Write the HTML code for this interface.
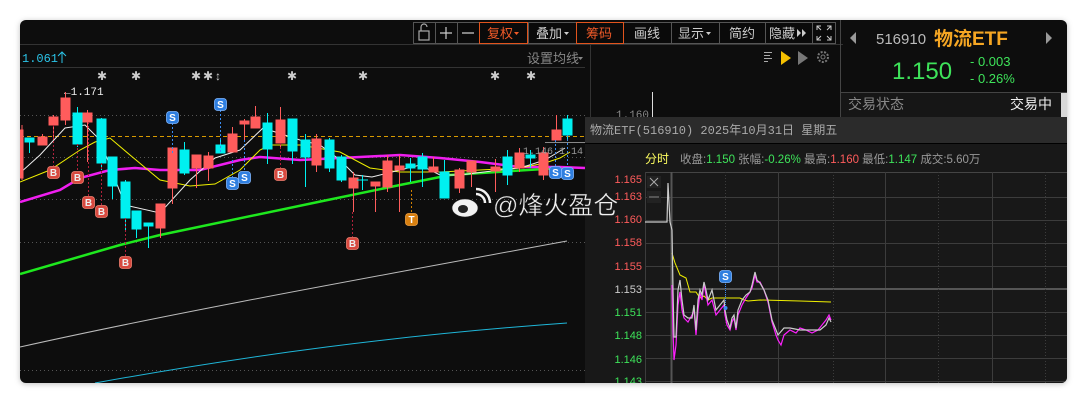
<!DOCTYPE html>
<html><head><meta charset="utf-8"><style>
html,body{margin:0;padding:0;background:#fff;width:1087px;height:404px;overflow:hidden}
svg{display:block}
text{font-family:"Liberation Sans","Noto Sans CJK SC",sans-serif}
.m{font-family:"Liberation Mono","Noto Sans CJK SC",monospace}
</style></head><body>
<svg width="1087" height="404" viewBox="0 0 1087 404" xmlns="http://www.w3.org/2000/svg">
<defs><clipPath id="card"><rect x="20" y="20" width="1047" height="363" rx="6"/></clipPath>
<filter id="sh" x="-5%" y="-5%" width="110%" height="120%"><feDropShadow dx="0" dy="1" stdDeviation="3" flood-color="#000" flood-opacity="0.25"/></filter></defs>
<rect x="20" y="20" width="1047" height="363" rx="6" fill="#0a0a0a" filter="url(#sh)"/>
<g clip-path="url(#card)">
<!-- toolbar -->
<g stroke="#555" fill="#0a0a0a">
<rect x="413.5" y="22.5" width="422" height="21"/>
</g>
<g stroke="#555">
<line x1="435.5" y1="22" x2="435.5" y2="44"/><line x1="457.5" y1="22" x2="457.5" y2="44"/>
<line x1="479.5" y1="22" x2="479.5" y2="44"/><line x1="528.5" y1="22" x2="528.5" y2="44"/>
<line x1="623.5" y1="22" x2="623.5" y2="44"/><line x1="671.5" y1="22" x2="671.5" y2="44"/>
<line x1="719.5" y1="22" x2="719.5" y2="44"/><line x1="765.5" y1="22" x2="765.5" y2="44"/>
<line x1="812.5" y1="22" x2="812.5" y2="44"/>
</g>
<rect x="479.5" y="22.5" width="48" height="21" fill="none" stroke="#e2541d"/>
<rect x="576.5" y="22.5" width="47" height="21" fill="none" stroke="#e2541d"/>
<!-- lock -->
<g stroke="#aaa" fill="none" stroke-width="1.2"><rect x="419" y="31" width="10" height="9"/><path d="M421 31v-4a3 3 0 0 1 6 0"/></g>
<g stroke="#ccc" stroke-width="1.2"><line x1="440" y1="33" x2="452" y2="33"/><line x1="446" y1="27" x2="446" y2="39"/><line x1="462" y1="33" x2="474" y2="33"/></g>
<g font-size="13" fill="#ccc">
<text x="487" y="38" fill="#f05a28">复权</text><path d="M514 32h5l-2.5 3z" fill="#f05a28"/>
<text x="536" y="38">叠加</text><path d="M564 32h5l-2.5 3z" fill="#ccc"/>
<text x="586" y="38" fill="#f05a28">筹码</text>
<text x="634" y="38">画线</text>
<text x="678" y="38">显示</text><path d="M706 32h5l-2.5 3z" fill="#ccc"/>
<text x="729" y="38">简约</text>
<text x="769" y="38">隐藏</text><path d="M797 29l4 4-4 4zM802 29l4 4-4 4z" fill="#ccc"/>
</g>
<g stroke="#ccc" fill="none" stroke-width="1"><path d="M817 30v-4h4M831 30v-4h-4M817 36v4h4M831 36v4h-4M817 26l4 4M831 26l-4 4M817 40l4-4M831 40l-4-4"/></g>
<!-- separators -->
<line x1="20" y1="44.5" x2="843" y2="44.5" stroke="#333"/>
<line x1="20" y1="67.5" x2="585" y2="67.5" stroke="#333"/>
<line x1="590.5" y1="44" x2="590.5" y2="117" stroke="#333"/>
<line x1="840.5" y1="20" x2="840.5" y2="117" stroke="#444"/>
<!-- right panel -->
<path d="M856 32v12l-6-6z" fill="#999"/><path d="M1046 32v12l6-6z" fill="#999"/>
<text x="876" y="44" font-size="15" fill="#bbb">516910</text>
<text x="934" y="45" font-size="19" font-weight="bold" fill="#f5a623">物流ETF</text>
<text x="892" y="79" font-size="24" fill="#3ee35a">1.150</text>
<text x="970" y="66" font-size="13" fill="#3ee35a">- 0.003</text>
<text x="970" y="83" font-size="13" fill="#3ee35a">- 0.26%</text>
<line x1="841" y1="92.5" x2="1067" y2="92.5" stroke="#444"/>
<rect x="841" y="93" width="226" height="24" fill="#161616"/>
<text x="848" y="109" font-size="14" fill="#888">交易状态</text>
<text x="1010" y="109" font-size="14" fill="#eee">交易中</text>
<rect x="1061" y="93" width="6" height="24" fill="#d8d8d8"/>
<!-- middle icons -->
<g stroke="#aaa"><line x1="764" y1="52.5" x2="772" y2="52.5"/><line x1="764" y1="55.5" x2="770" y2="55.5"/><line x1="764" y1="58.5" x2="772" y2="58.5"/><line x1="764" y1="61.5" x2="768" y2="61.5"/></g>
<path d="M781 51l10 7-10 7z" fill="#f5c000"/><path d="M798 51l10 7-10 7z" fill="#777"/>
<circle cx="823" cy="57" r="5" fill="none" stroke="#777" stroke-width="2" stroke-dasharray="2 1.5"/><circle cx="823" cy="57" r="2" fill="none" stroke="#777"/>
<line x1="652.5" y1="92" x2="652.5" y2="117" stroke="#ddd"/>
<text x="616" y="118" font-size="11" fill="#888" class="m">1.160</text>
<!-- left chart header -->
<text x="22" y="62" font-size="12" fill="#2bc4e8" class="m">1.061</text>
<path d="M62 63V52M58 56l4-4 4 4" stroke="#2bc4e8" fill="none"/>
<text x="527" y="63" font-size="13" fill="#888">设置均线</text><path d="M578 57h5l-2.5 3z" fill="#888"/>
<!-- stars -->
<g fill="#ccc" font-size="12">
<text x="97" y="80">✱</text><text x="131" y="80">✱</text><text x="191" y="80">✱</text><text x="203" y="80">✱</text><text x="215" y="80">↕</text><text x="287" y="80">✱</text><text x="358" y="80">✱</text><text x="490" y="80">✱</text><text x="526" y="80">✱</text>
</g>
<text x="64" y="95" font-size="11" fill="#eee" class="m">←1.171</text>
<!-- grid -->
<g stroke="#555" stroke-dasharray="1 3">
<line x1="20" y1="115.5" x2="585" y2="115.5"/><line x1="20" y1="157.5" x2="585" y2="157.5"/>
<line x1="20" y1="199.5" x2="585" y2="199.5"/><line x1="20" y1="242.5" x2="585" y2="242.5"/>
<line x1="20" y1="370.5" x2="585" y2="370.5"/>
</g>
<line x1="20" y1="136.5" x2="585" y2="136.5" stroke="#d89a00" stroke-dasharray="4 3"/>
<!-- long MAs -->
<path d="M20 347 C150 318,300 290,567 241" stroke="#bbb" fill="none"/>
<path d="M95 383 C250 355,400 335,567 323" stroke="#1fb6d8" fill="none"/>
<polyline points="20,274 120,245 160,235 318,202 400,185 450,175 560,168" stroke="#1ee81e" stroke-width="2.5" fill="none"/>
<polyline points="20,202 60,190 80,178 110,170 135,168 160,170 200,170 240,160 260,157 300,160 360,157 400,155 440,158 480,162 520,167 560,167 585,168" stroke="#f01ef0" stroke-width="2.5" fill="none"/>
<polyline points="20,182 50,170 80,150 95,142 110,138 130,155 160,180 190,186 215,184 240,170 260,150 270,145 300,145 340,152 370,168 400,172 440,172 480,170 520,168 545,163 560,158 570,152" stroke="#f0f000" fill="none"/>
<polyline points="20,173 40,155 65,128 85,125 100,140 125,205 160,213 190,180 215,158 240,150 263,128 300,140 320,145 340,160 355,175 372,177 400,170 420,165 440,175 460,175 500,170 520,168 545,160 565,148" stroke="#eee" fill="none"/>
<!-- candles: wick then body -->
<g id="c">
<g stroke="#ff5c5c" fill="#ff5c5c">
<line x1="22" y1="125" x2="22" y2="180"/><rect x="20" y="130" width="3" height="48"/>
<line x1="42.5" y1="134" x2="42.5" y2="145"/><rect x="38" y="137" width="9" height="8"/>
<line x1="53.5" y1="115" x2="53.5" y2="140"/><rect x="49" y="117" width="9" height="8"/>
<line x1="65.5" y1="92" x2="65.5" y2="125"/><rect x="61" y="98" width="9" height="22"/>
<line x1="87.5" y1="110" x2="87.5" y2="162"/><rect x="83" y="113" width="9" height="9"/>
<line x1="160.5" y1="204" x2="160.5" y2="238"/><rect x="156" y="204" width="9" height="24"/>
<line x1="172.5" y1="148" x2="172.5" y2="204"/><rect x="168" y="148" width="9" height="40"/>
<line x1="196.5" y1="155" x2="196.5" y2="188"/><rect x="192" y="155" width="9" height="13"/>
<line x1="208.5" y1="152" x2="208.5" y2="181"/><rect x="204" y="156" width="9" height="12"/>
<line x1="232.5" y1="127" x2="232.5" y2="152"/><rect x="228" y="134" width="9" height="18"/>
<line x1="244.5" y1="119" x2="244.5" y2="140"/><rect x="240" y="121" width="9" height="3"/>
<line x1="255.5" y1="106" x2="255.5" y2="128"/><rect x="251" y="117" width="9" height="11"/>
<line x1="280.5" y1="107" x2="280.5" y2="148"/><rect x="276" y="120" width="9" height="23"/>
<line x1="316.5" y1="134" x2="316.5" y2="172"/><rect x="312" y="139" width="9" height="26"/>
<line x1="353.5" y1="172" x2="353.5" y2="212"/><rect x="349" y="178" width="9" height="10"/>
<line x1="375.5" y1="182" x2="375.5" y2="212"/><rect x="371" y="182" width="9" height="4"/>
<line x1="387.5" y1="155" x2="387.5" y2="192"/><rect x="383" y="161" width="9" height="26"/>
<line x1="399.5" y1="155" x2="399.5" y2="212"/><rect x="395" y="166" width="9" height="4"/>
<line x1="433.5" y1="157" x2="433.5" y2="172"/><rect x="429" y="167" width="9" height="5"/>
<line x1="459.5" y1="168" x2="459.5" y2="193"/><rect x="455" y="170" width="9" height="18"/>
<line x1="471.5" y1="161" x2="471.5" y2="187"/><rect x="467" y="161" width="9" height="11"/>
<line x1="495.5" y1="159" x2="495.5" y2="192"/><rect x="491" y="167" width="9" height="4"/>
<line x1="519.5" y1="148" x2="519.5" y2="172"/><rect x="515" y="153" width="9" height="15"/>
<line x1="543.5" y1="147" x2="543.5" y2="180"/><rect x="539" y="153" width="9" height="22"/>
<line x1="556.5" y1="115" x2="556.5" y2="140"/><rect x="552" y="130" width="9" height="10"/>
</g>
<g stroke="#00f0f0" fill="#00f0f0">
<line x1="29.5" y1="138" x2="29.5" y2="153"/><rect x="25" y="138" width="9" height="4"/>
<line x1="77.5" y1="107" x2="77.5" y2="147"/><rect x="73" y="113" width="9" height="31"/>
<line x1="101.5" y1="118" x2="101.5" y2="170"/><rect x="97" y="119" width="9" height="44"/>
<line x1="112.5" y1="157" x2="112.5" y2="199"/><rect x="108" y="157" width="9" height="29"/>
<line x1="125.5" y1="180" x2="125.5" y2="232"/><rect x="121" y="182" width="9" height="36"/>
<line x1="136.5" y1="211" x2="136.5" y2="238"/><rect x="132" y="211" width="9" height="18"/>
<line x1="148.5" y1="223" x2="148.5" y2="248"/><rect x="144" y="223" width="9" height="3"/>
<line x1="184.5" y1="142" x2="184.5" y2="175"/><rect x="180" y="150" width="9" height="23"/>
<line x1="220.5" y1="138" x2="220.5" y2="153"/><rect x="216" y="145" width="9" height="8"/>
<line x1="267.5" y1="113" x2="267.5" y2="164"/><rect x="263" y="123" width="9" height="26"/>
<line x1="292.5" y1="119" x2="292.5" y2="164"/><rect x="288" y="119" width="9" height="32"/>
<line x1="305.5" y1="134" x2="305.5" y2="187"/><rect x="301" y="140" width="9" height="17"/>
<line x1="329.5" y1="138" x2="329.5" y2="172"/><rect x="325" y="140" width="9" height="28"/>
<line x1="341.5" y1="155" x2="341.5" y2="182"/><rect x="337" y="157" width="9" height="23"/>
<line x1="357" y1="180" x2="368" y2="180"/><line x1="362.5" y1="175" x2="362.5" y2="190"/>
<line x1="410.5" y1="158" x2="410.5" y2="182"/><rect x="406" y="164" width="9" height="4"/>
<line x1="422.5" y1="153" x2="422.5" y2="187"/><rect x="418" y="157" width="9" height="12"/>
<line x1="444.5" y1="160" x2="444.5" y2="198"/><rect x="440" y="172" width="9" height="26"/>
<line x1="507.5" y1="150" x2="507.5" y2="185"/><rect x="503" y="157" width="9" height="18"/>
<line x1="530.5" y1="150" x2="530.5" y2="168"/><rect x="526" y="155" width="9" height="3"/>
<line x1="567.5" y1="115" x2="567.5" y2="140"/><rect x="563" y="119" width="9" height="16"/>
</g>
</g>
<!-- marker lines -->
<g stroke-dasharray="2 2" fill="none">
<path d="M53.5 125V166M77.5 144V171M88.5 122V196M101.5 163V205M125.5 218V256M280.5 143V168M352.5 212V237" stroke="#b0203a"/>
<path d="M172.5 123V155M220.5 110V152M232.5 160V177M244.5 140V171M555.5 140V166M567.5 135V167" stroke="#3a8cf0"/>
<path d="M411.5 190V213" stroke="#d08000"/>
</g>
<g font-size="10" font-weight="bold" text-anchor="middle">
<g fill="#d8493f" stroke="#f08070" stroke-width="0.8">
<rect x="47.5" y="166.5" width="12" height="12" rx="3"/><rect x="71.5" y="171.5" width="12" height="12" rx="3"/><rect x="82.5" y="196.5" width="12" height="12" rx="3"/><rect x="95.5" y="205.5" width="12" height="12" rx="3"/><rect x="119.5" y="256.5" width="12" height="12" rx="3"/><rect x="274.5" y="168.5" width="12" height="12" rx="3"/><rect x="346.5" y="237.5" width="12" height="12" rx="3"/>
</g>
<g fill="#eee"><text x="53.5" y="176">B</text><text x="77.5" y="181">B</text><text x="88.5" y="206">B</text><text x="101.5" y="215">B</text><text x="125.5" y="266">B</text><text x="280.5" y="178">B</text><text x="352.5" y="247">B</text></g>
<g fill="#2f7fe0" stroke="#7fb6ff" stroke-width="0.8">
<rect x="166.5" y="111.5" width="12" height="12" rx="3"/><rect x="214.5" y="98.5" width="12" height="12" rx="3"/><rect x="226.5" y="177.5" width="12" height="12" rx="3"/><rect x="238.5" y="171.5" width="12" height="12" rx="3"/><rect x="549.5" y="166.5" width="12" height="12" rx="3"/><rect x="561.5" y="167.5" width="12" height="12" rx="3"/>
</g>
<g fill="#fff"><text x="172.5" y="121">S</text><text x="220.5" y="108">S</text><text x="232.5" y="187">S</text><text x="244.5" y="181">S</text><text x="555.5" y="176">S</text><text x="567.5" y="177">S</text></g>
<rect x="405.5" y="213.5" width="12" height="12" rx="3" fill="#d88010" stroke="#f0a040" stroke-width="0.8"/><text x="411.5" y="223" fill="#fff">T</text>
</g>
<line x1="545" y1="142.5" x2="585" y2="142.5" stroke="#888"/>
<text x="523" y="154" font-size="10" fill="#999" class="m">1.146 1.14</text>
<!-- popup -->
<rect x="585" y="117" width="482" height="266" fill="#181818"/>
<rect x="585" y="117" width="482" height="26" fill="#2b2b2b"/>
<line x1="585" y1="143.5" x2="1067" y2="143.5" stroke="#000"/>
<text x="590" y="134" font-size="12" fill="#aaa" class="m">物流ETF(516910) 2025年10月31日 星期五</text>
<text x="645" y="163" font-size="12" fill="#ffff60">分时</text>
<g font-size="11.5" class="m">
<text x="680" y="163" fill="#999">收盘:<tspan fill="#3ee35a">1.150</tspan> 张幅:<tspan fill="#3ee35a">-0.26%</tspan> 最高:<tspan fill="#ff5c5c">1.160</tspan> 最低:<tspan fill="#3ee35a">1.147</tspan> 成交:5.60万</text>
</g>
<line x1="645" y1="172.5" x2="1067" y2="172.5" stroke="#444"/>
<g stroke="#3c3c3c">
<line x1="645" y1="197.5" x2="1067" y2="197.5"/><line x1="645" y1="220.5" x2="1067" y2="220.5"/><line x1="645" y1="243.5" x2="1067" y2="243.5"/><line x1="645" y1="266.5" x2="1067" y2="266.5"/>
<line x1="645" y1="312.5" x2="1067" y2="312.5"/><line x1="645" y1="335.5" x2="1067" y2="335.5"/><line x1="645" y1="358.5" x2="1067" y2="358.5"/><line x1="645" y1="381.5" x2="1067" y2="381.5"/>
<line x1="645.5" y1="172" x2="645.5" y2="383"/><line x1="778.5" y1="172" x2="778.5" y2="383"/><line x1="885.5" y1="172" x2="885.5" y2="383"/><line x1="992.5" y1="172" x2="992.5" y2="383"/>
</g>
<line x1="671.5" y1="172" x2="671.5" y2="383" stroke="#555" stroke-width="2"/>
<line x1="645" y1="289" x2="1067" y2="289" stroke="#555" stroke-width="2"/>
<g stroke="#3c3c3c" stroke-dasharray="1 2"><line x1="725.5" y1="172" x2="725.5" y2="383"/><line x1="833.5" y1="172" x2="833.5" y2="383"/><line x1="938.5" y1="172" x2="938.5" y2="383"/><line x1="1045.5" y1="172" x2="1045.5" y2="383"/></g>
<g font-size="11" text-anchor="end" class="m">
<text x="642" y="183" fill="#ff5c5c">1.165</text><text x="642" y="200" fill="#ff5c5c">1.163</text><text x="642" y="223" fill="#ff5c5c">1.160</text><text x="642" y="246" fill="#ff5c5c">1.158</text><text x="642" y="270" fill="#ff5c5c">1.155</text>
<text x="642" y="293" fill="#ccc">1.153</text>
<text x="642" y="316" fill="#3ee35a">1.151</text><text x="642" y="339" fill="#3ee35a">1.148</text><text x="642" y="363" fill="#3ee35a">1.146</text><text x="642" y="385" fill="#3ee35a">1.143</text>
</g>
<rect x="647" y="176" width="14" height="12" fill="#222"/><path d="M650 178l8 8M658 178l-8 8" stroke="#aaa"/>
<rect x="647" y="191" width="14" height="12" fill="#222"/><path d="M649 197h10" stroke="#888"/>
<polyline points="672,253 675,263 680,275 686,278 690,292 696,292 700,298 704,296 708,300 712,298 726,298 740,298 744,300 748,301 760,300 800,301 831,302" stroke="#f0f000" fill="none"/>
<polyline points="672,285 673,330 674,360 676,345 678,305 680,292 682,310 684,318 688,322 692,315 694,310 696,335 698,310 700,293 702,300 704,284 706,295 708,305 712,300 716,315 720,310 724,305 725,315 727,325 730,330 732,322 734,318 736,330 738,315 742,305 746,298 750,292 752,288 755,275 757,282 760,282 764,290 768,302 772,322 776,335 778,340 781,345 784,335 790,330 796,333 800,328 806,330 812,333 818,330 822,325 826,320 829,315 831,320" stroke="#ff20ff" stroke-width="1.2" fill="none"/>
<polyline points="645,222 667,222 668,183 670,222 672,230 673,289 674,337 676,337 678,290 680,280 682,300 684,315 688,318 692,318 694,305 696,330 698,300 700,290 702,295 704,282 706,290 708,300 712,290 716,310 720,305 724,300 725,310 727,320 730,328 732,318 734,315 736,328 738,310 742,300 746,295 750,292 752,285 755,272 757,280 760,283 764,290 768,300 772,320 776,330 778,335 784,328 790,328 800,330 820,330 826,325 829,318 831,322" stroke="#ccc" stroke-width="1.2" fill="none"/>
<line x1="725.5" y1="282" x2="725.5" y2="307" stroke="#3a8cf0" stroke-dasharray="1 1"/><circle cx="725.5" cy="308" r="2" fill="#3a8cf0"/>
<rect x="719.5" y="270.5" width="12" height="12" rx="3" fill="#2f7fe0" stroke="#7fb6ff" stroke-width="0.8"/><text x="725.5" y="280" fill="#fff" font-size="10" font-weight="bold" text-anchor="middle">S</text>
<!-- watermark -->
<g fill="#f2f2f2" stroke="#222" stroke-width="0.6">
<ellipse cx="465" cy="208" rx="13" ry="9"/>
</g>
<ellipse cx="463" cy="209" rx="5" ry="4" fill="#222"/>
<path d="M476 194a9 9 0 0 1 9 9M476 189a14 14 0 0 1 14 14" stroke="#f2f2f2" stroke-width="2.5" fill="none"/>
<text x="493" y="214" font-size="25" fill="#f2f2f2" stroke="#222" stroke-width="0.5">@烽火盈仓</text>
</g>
</svg>
</body></html>
